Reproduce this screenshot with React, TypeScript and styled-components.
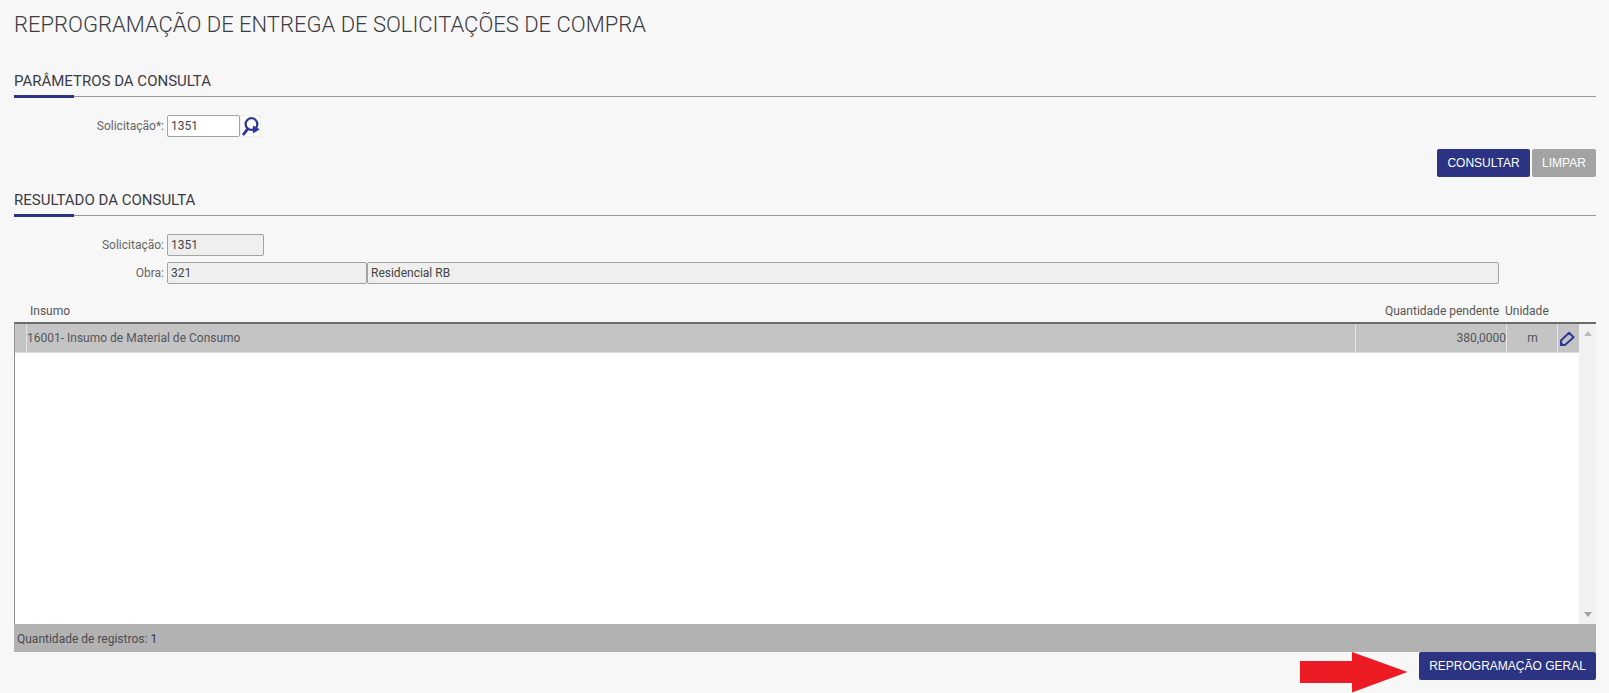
import React from 'react';
import styled, { createGlobalStyle } from 'styled-components';

const GlobalStyle = createGlobalStyle`
  html, body {
    margin: 0;
    padding: 0;
    height: 100%;
    background: #f7f7f7;
    overflow: hidden;
  }
  * {
    box-sizing: border-box;
  }
`;

const Page = styled.div`
  width: 1609px;
  height: 693px;
  padding: 12px 13px 0 14px;
  background: #f7f7f7;
  font-family: Roboto, "Liberation Sans", sans-serif;
  font-size: 12px;
  color: #555;
  overflow: hidden;
`;

const PageTitle = styled.h1`
  margin: 0;
  font-size: 22px;
  line-height: 26px;
  font-weight: 300;
  color: #3c3c46;
`;

const SectionHeader = styled.h2<{ $top: number }>`
  position: relative;
  margin: ${(p) => p.$top}px 0 0;
  height: 27px;
  padding-top: 1px;
  border-bottom: 1px solid #999;
  font-size: 15px;
  line-height: 20px;
  font-weight: 400;
  color: #3c3c46;

  &::after {
    content: '';
    position: absolute;
    left: 0;
    bottom: -2px;
    width: 60px;
    height: 3px;
    background: #2b3382;
  }
`;

const FormRow = styled.div<{ $top: number }>`
  display: flex;
  align-items: center;
  margin-top: ${(p) => p.$top}px;
  height: 22px;
`;

const Label = styled.label`
  width: 153px;
  padding-right: 3px;
  text-align: right;
  color: #666;
`;

const Field = styled.div<{ $width: number; $readOnly?: boolean }>`
  width: ${(p) => p.$width}px;
  height: 22px;
  padding: 0 3px 0 3px;
  display: flex;
  align-items: center;
  border: 1px solid #a3a3a3;
  border-radius: 2px;
  background: ${(p) => (p.$readOnly ? '#efefef' : '#fff')};
  color: #444;
`;

const LookupButton = styled.div`
  width: 21px;
  height: 22px;
  padding-left: 1px;
  display: flex;
  align-items: center;
  justify-content: center;
  background: #fff;
  border: 1px solid #eee;
`;

const ButtonRow = styled.div`
  display: flex;
  justify-content: flex-end;
  gap: 2px;
  margin-top: 12px;
`;

const ActionButton = styled.button<{ $muted?: boolean; $width: number }>`
  width: ${(p) => p.$width}px;
  height: 28px;
  padding: 0;
  border: 0;
  border-radius: 2px;
  background: ${(p) => (p.$muted ? '#a3a3a3' : '#2b3382')};
  color: #fff;
  font-family: "Liberation Sans", Arial, sans-serif;
  font-size: 12px;
`;

const GridHead = styled.div`
  display: grid;
  grid-template-columns: 12px 1329px 150px 52px 22px 17px;
  margin-top: 20px;
  height: 18px;
  line-height: 14px;
  color: #555;
`;

const HeadCell = styled.div<{ $align?: string; $pad?: string }>`
  grid-column: ${(p) => (p.$align === 'right' ? 3 : p.$align === 'left' ? 4 : 2)} / span ${(p) =>
      p.$align === 'left' ? 2 : 1};
  text-align: ${(p) => (p.$align === 'right' ? 'right' : 'left')};
  padding: ${(p) => p.$pad || '0'};
  white-space: nowrap;
`;

const GridBody = styled.div`
  display: grid;
  grid-template-columns: 1fr 17px;
  height: 302px;
  border-top: 2px solid #6b6b6b;
  border-left: 1px solid #8f8f8f;
  background: #fff;
`;

const Rows = styled.div`
  min-width: 0;
`;

const DataRow = styled.div`
  display: grid;
  grid-template-columns: 11px 1329px 151px 51px 22px;
  height: 28px;
  background: #c4c4c4;
  box-shadow: 0 1px 0 #dedede;
  line-height: 29px;
  color: #55555a;
`;

const Cell = styled.div<{ $align?: string }>`
  box-shadow: 1px 0 0 #e4e4e4;
  padding: 0 0 0 1px;
  text-align: ${(p) => p.$align || 'left'};
  white-space: nowrap;
`;

const NumCell = styled(Cell)<{ $shift?: boolean }>`
  padding: 0 0 0 ${(p) => (p.$shift ? 2 : 0)}px;
`;

const EditCell = styled.div`
  display: flex;
  align-items: center;
  justify-content: center;
  padding-right: 2px;
`;

const Scrollbar = styled.div`
  display: flex;
  flex-direction: column;
  justify-content: space-between;
  align-items: center;
  padding: 7px 0 7px;
  background: #f1f1f1;
`;

const ScrollArrow = styled.div<{ $down?: boolean }>`
  width: 0;
  height: 0;
  border-left: 4px solid transparent;
  border-right: 4px solid transparent;
  ${(p) => (p.$down ? 'border-top: 5px solid #a3a3a3;' : 'border-bottom: 5px solid #bcbcbc;')}
`;

const GridFooter = styled.div`
  height: 28px;
  padding: 1px 3px 0 3px;
  display: flex;
  align-items: center;
  gap: 3px;
  background: #b2b2b2;
  color: #4a4a50;
`;

const RecordCount = styled.span`
  color: #33333a;
`;

const BottomBar = styled.div`
  display: flex;
  justify-content: flex-end;
  align-items: flex-start;
  gap: 11px;
`;

const SearchIcon = () => (
  <svg width="19" height="20" viewBox="0 0 19 20" fill="none">
    <circle cx="10" cy="8" r="6.200" stroke="#2b3a96" strokeWidth="2.400" />
    <path d="M6 13 L1.800 18.500" stroke="#2b3a96" strokeWidth="3" strokeLinecap="round" />
    <path d="M11.500 9.500 L18.800 13.500 L11.500 18 Z" fill="#2b3a96" />
  </svg>
);

const EditIcon = () => (
  <svg width="16" height="16" viewBox="0 0 16 16" fill="none">
    <path d="M10 1.800 L14.600 6.300 L6 14 L2 14 L2 9.500 Z" stroke="#2b3a96" strokeWidth="1.900" strokeLinejoin="round" />
    <path d="M1 15 L1.300 10 L6 14.700 Z" fill="#2b3a96" />
  </svg>
);

const RedArrow = () => (
  <svg width="108" height="41" viewBox="0 0 108 41" style={{ display: 'block' }}>
    <path d="M0 9 H52 V0 L107.500 20 L52 40.500 V31 H0 Z" fill="#ed1c24" />
  </svg>
);

export default function App() {
  return (
    <Page>
      <GlobalStyle />
      <PageTitle>REPROGRAMAÇÃO DE ENTREGA DE SOLICITAÇÕES DE COMPRA</PageTitle>

      <SectionHeader $top={32}>PARÂMETROS DA CONSULTA</SectionHeader>
      <FormRow $top={18}>
        <Label>Solicitação*:</Label>
        <Field $width={73}>1351</Field>
        <LookupButton>
          <SearchIcon />
        </LookupButton>
      </FormRow>
      <ButtonRow>
        <ActionButton $width={93}>CONSULTAR</ActionButton>
        <ActionButton $width={64} $muted>LIMPAR</ActionButton>
      </ButtonRow>

      <SectionHeader $top={12}>RESULTADO DA CONSULTA</SectionHeader>
      <FormRow $top={18}>
        <Label>Solicitação:</Label>
        <Field $width={97} $readOnly>1351</Field>
      </FormRow>
      <FormRow $top={6}>
        <Label>Obra:</Label>
        <Field $width={200} $readOnly>321</Field>
        <Field $width={1132} $readOnly>Residencial RB</Field>
      </FormRow>

      <GridHead>
        <HeadCell $pad="0 0 0 4px">Insumo</HeadCell>
        <HeadCell $align="right" $pad="0 6px 0 0">Quantidade pendente</HeadCell>
        <HeadCell $align="left">Unidade</HeadCell>
      </GridHead>
      <GridBody>
        <Rows>
          <DataRow>
            <Cell />
            <Cell>16001- Insumo de Material de Consumo</Cell>
            <NumCell $align="right">380,0000</NumCell>
            <NumCell $align="center" $shift>m</NumCell>
            <EditCell>
              <EditIcon />
            </EditCell>
          </DataRow>
        </Rows>
        <Scrollbar>
          <ScrollArrow />
          <ScrollArrow $down />
        </Scrollbar>
      </GridBody>
      <GridFooter>
        <span>Quantidade de registros:</span>
        <RecordCount>1</RecordCount>
      </GridFooter>

      <BottomBar>
        <RedArrow />
        <ActionButton $width={177}>REPROGRAMAÇÃO GERAL</ActionButton>
      </BottomBar>
    </Page>
  );
}
